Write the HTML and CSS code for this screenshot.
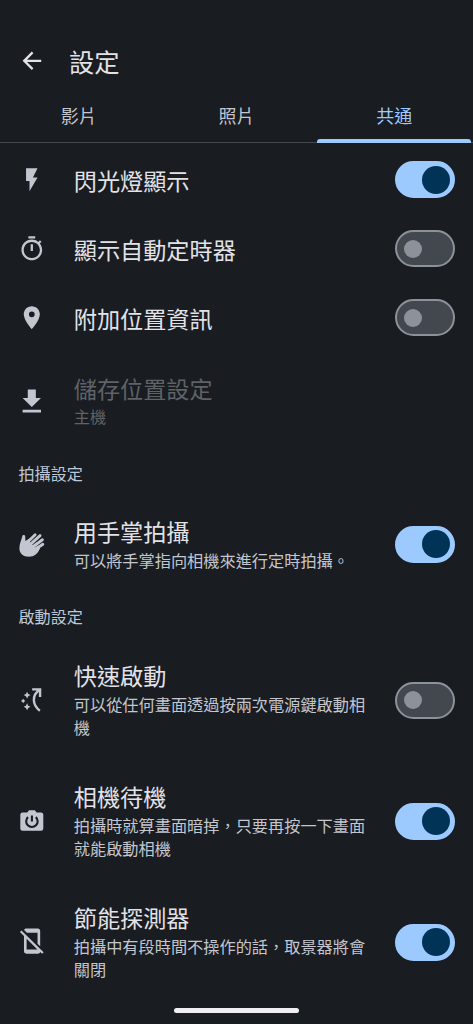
FILE: index.html
```html
<!DOCTYPE html>
<html lang="zh-Hant">
<head>
<meta charset="utf-8">
<title>設定</title>
<link rel="stylesheet" href="styles.css">
</head>
<body>
<div class="screen">
  <header class="appbar">
    <svg class="icon back" viewBox="0 0 24 24"><path d="M20.2 11H7.83l5.59-5.59L12 4l-8 8 8 8 1.41-1.41L7.83 13H20.2v-2z"/></svg>
    <h1 class="heading">設定</h1>
  </header>
  <nav class="tabs">
    <div class="tab">影片</div>
    <div class="tab">照片</div>
    <div class="tab active">共通</div>
  </nav>
  <main class="list">
    <div class="row single">
      <svg class="icon" viewBox="0 0 24 24"><path d="M7 2v11h3v9l7-12h-4l4-8z"/></svg>
      <div class="text"><div class="title">閃光燈顯示</div></div>
      <div class="switch on"><div class="knob"></div></div>
    </div>
    <div class="row single">
      <svg class="icon" viewBox="0 0 24 24"><path d="M15 1H9v2h6V1zm-4 13h2V8h-2v6zm8.03-6.61l1.42-1.42c-.43-.51-.9-.99-1.41-1.41l-1.42 1.42C16.07 4.74 14.12 4 12 4c-4.97 0-9 4.03-9 9s4.02 9 9 9 9-4.03 9-9c0-2.12-.74-4.07-1.97-5.61zM12 20c-3.87 0-7-3.13-7-7s3.13-7 7-7 7 3.13 7 7-3.13 7-7 7z"/></svg>
      <div class="text"><div class="title">顯示自動定時器</div></div>
      <div class="switch"><div class="knob"></div></div>
    </div>
    <div class="row single">
      <svg class="icon" viewBox="0 0 24 24"><path d="M12 2C8.13 2 5 5.13 5 9c0 5.25 7 13 7 13s7-7.75 7-13c0-3.87-3.13-7-7-7zm0 9.5a2.5 2.5 0 0 1 0-5 2.5 2.5 0 0 1 0 5z"/></svg>
      <div class="text"><div class="title">附加位置資訊</div></div>
      <div class="switch"><div class="knob"></div></div>
    </div>
    <div class="row double disabled">
      <svg class="icon" viewBox="0 0 24 24"><path d="M20 9.6h-4.5V2.2h-7v7.4H4l8 7.9zM4 19.8v2.4h16v-2.4z"/></svg>
      <div class="text"><div class="title">儲存位置設定</div><div class="sub">主機</div></div>
    </div>
    <h2 class="section">拍攝設定</h2>
    <div class="row double">
      <svg class="icon" viewBox="0 0 24 24">
        <path d="M1.2 15.2C1.2 11 3 8.2 3.7 4.6 4 3 6.4 3.2 6.3 4.9L6.4 8.6 10 6.6 15 8.5 17.5 12 19.2 15C17.5 19.5 14 22.4 9.5 22.4 4.6 22.4 1.2 19.3 1.2 15.2z"/>
        <path class="gaps" d="M11 9.3 17.5 2.6M12.8 11.3 21.3 4.6M14.6 13.4 22.6 8.7"/>
        <path class="fingers" d="M8 10 14.9 3.2M10 12.3 19.2 4M12.2 14.4 21.2 7.6M14.5 16.4 21.6 11.5"/>
      </svg>
      <div class="text"><div class="title">用手掌拍攝</div><div class="sub">可以將手掌指向相機來進行定時拍攝。</div></div>
      <div class="switch on"><div class="knob"></div></div>
    </div>
    <h2 class="section">啟動設定</h2>
    <div class="row triple">
      <svg class="icon" viewBox="0 0 24 24">
        <path class="line" d="M12.3 2.9H19.2V9.5M18.8 3.3C12 8 12.2 16 19 21.5"/>
        <path d="M7.9 4.9l1 2 2 1-2 1-1 2-1-2-2-1 2-1zM7.9 15.1l1 2 2 1-2 1-1 2-1-2-2-1 2-1zM4.5 11l.8 1.2 1.2.8-1.2.8-.8 1.2-.8-1.2-1.2-.8 1.2-.8z"/>
      </svg>
      <div class="text"><div class="title">快速啟動</div><div class="sub">可以從任何畫面透過按兩次電源鍵啟動相機</div></div>
      <div class="switch"><div class="knob"></div></div>
    </div>
    <div class="row triple">
      <svg class="icon" viewBox="0 0 24 24">
        <path d="M4 4.8h4l1.6-2h5l1.6 2H20a2 2 0 0 1 2 2v11.9a2 2 0 0 1-2 2H4a2 2 0 0 1-2-2V6.8a2 2 0 0 1 2-2z"/>
        <path class="cut" d="M12.1 7.3v5.4M8.7 8.8a5 5 0 1 0 6.8 0"/>
      </svg>
      <div class="text"><div class="title">相機待機</div><div class="sub">拍攝時就算畫面暗掉，只要再按一下畫面就能啟動相機</div></div>
      <div class="switch on"><div class="knob"></div></div>
    </div>
    <div class="row triple">
      <svg class="icon" viewBox="0 0 24 24"><path d="M17 4.2v9.4l2.3 2.3V2.5c0-1.1-.9-2-2-2H7.2c-.9 0-1.6.5-1.9 1.3L7.7 4.2zM3 2.2 1.7 3.5 5.2 7V20.3c0 1.1.9 2 2 2h10.1c1 0 1.8-.7 2-1.5l1.7 1.7 1.3-1.3zM7.5 18.7V9.3l9.4 9.4z"/></svg>
      <div class="text"><div class="title">節能探測器</div><div class="sub">拍攝中有段時間不操作的話，取景器將會關閉</div></div>
      <div class="switch on"><div class="knob"></div></div>
    </div>
  </main>
  <div class="navbar"><div class="handle"></div></div>
</div>
</body>
</html>
```
FILE: styles.css
```css
* { box-sizing: border-box; }

body {
  margin: 0;
  background: #191c20;
  color: #e2e2e9;
  font-family: "Noto Sans CJK TC", sans-serif;
}

.screen {
  display: flex;
  flex-direction: column;
  width: 473px;
  height: 1024px;
  overflow: hidden;
}

.appbar {
  display: flex;
  flex: none;
  align-items: center;
  height: 91px;
  padding: 30px 18.2px 0;
}

.heading {
  margin: 1px 0 0 23.2px;
  font-size: 25.3px;
  font-weight: 400;
  line-height: 36px;
}

.tabs {
  display: flex;
  flex: none;
  height: 52px;
  background: linear-gradient(#44474c, #44474c) bottom / 100% 1.5px no-repeat;
}

.tab {
  display: flex;
  flex: 1;
  flex-direction: column;
  justify-content: space-between;
  color: #c3c6cf;
  font-size: 18px;
  line-height: 49px;
  text-align: center;
}

.active { color: #9ccaff; }

.active::after {
  content: "";
  height: 4px;
  margin: -1px 2px 0;
  border-radius: 3px 3px 0 0;
  background: #9ccaff;
}

.list {
  flex: none;
  padding-top: 2.4px;
}

.row {
  display: flex;
  align-items: center;
  padding: 0 18.5px 0 18.2px;
}

.single { height: 69px; }
.double { height: 97px; }
.triple { height: 121px; }

.icon {
  flex: none;
  width: 27.6px;
  height: 27.6px;
  fill: #c3c6cf;
}

.icon.back { fill: #e2e2e9; }

.fingers,
.gaps {
  fill: none;
  stroke: #c3c6cf;
  stroke-width: 2.5;
  stroke-linecap: round;
}

.gaps {
  stroke: #191c20;
  stroke-width: 1.6;
}

.line {
  fill: none;
  stroke: #c3c6cf;
  stroke-width: 2.1;
}

.cut {
  fill: none;
  stroke: #191c20;
  stroke-width: 1.8;
}

.text {
  width: 296px;
  margin-left: 28px;
}

.title {
  padding-bottom: 1.5px;
  font-size: 23.15px;
  line-height: 31px;
}

.single .title { padding: 1px 0 0; }

.sub {
  color: #c3c6cf;
  font-size: 16.2px;
  line-height: 23.5px;
}

.disabled .title,
.disabled .sub { color: #5f6267; }

.section {
  display: flex;
  align-items: center;
  height: 46.6px;
  margin: 0;
  padding-left: 18.5px;
  color: #bbc8db;
  font-size: 16.1px;
  font-weight: 400;
}

.switch {
  display: flex;
  flex: none;
  align-items: center;
  width: 60px;
  height: 37px;
  margin-left: auto;
  padding-left: 7px;
  border: 2.3px solid #8d9199;
  border-radius: 19px;
  background: #43474e;
}

.knob {
  flex: none;
  width: 18.4px;
  height: 18.4px;
  border-radius: 50%;
  background: #8d9199;
}

.on {
  justify-content: flex-end;
  padding-right: 3px;
  border-color: #9ccaff;
  background: #9ccaff;
}

.on .knob {
  width: 28px;
  height: 28px;
  background: #003355;
}

.navbar {
  display: flex;
  flex: 1;
  align-items: flex-start;
  justify-content: center;
  padding-top: 5px;
}

.handle {
  width: 125px;
  height: 5px;
  border-radius: 3px;
  background: #f1eff1;
}
```
